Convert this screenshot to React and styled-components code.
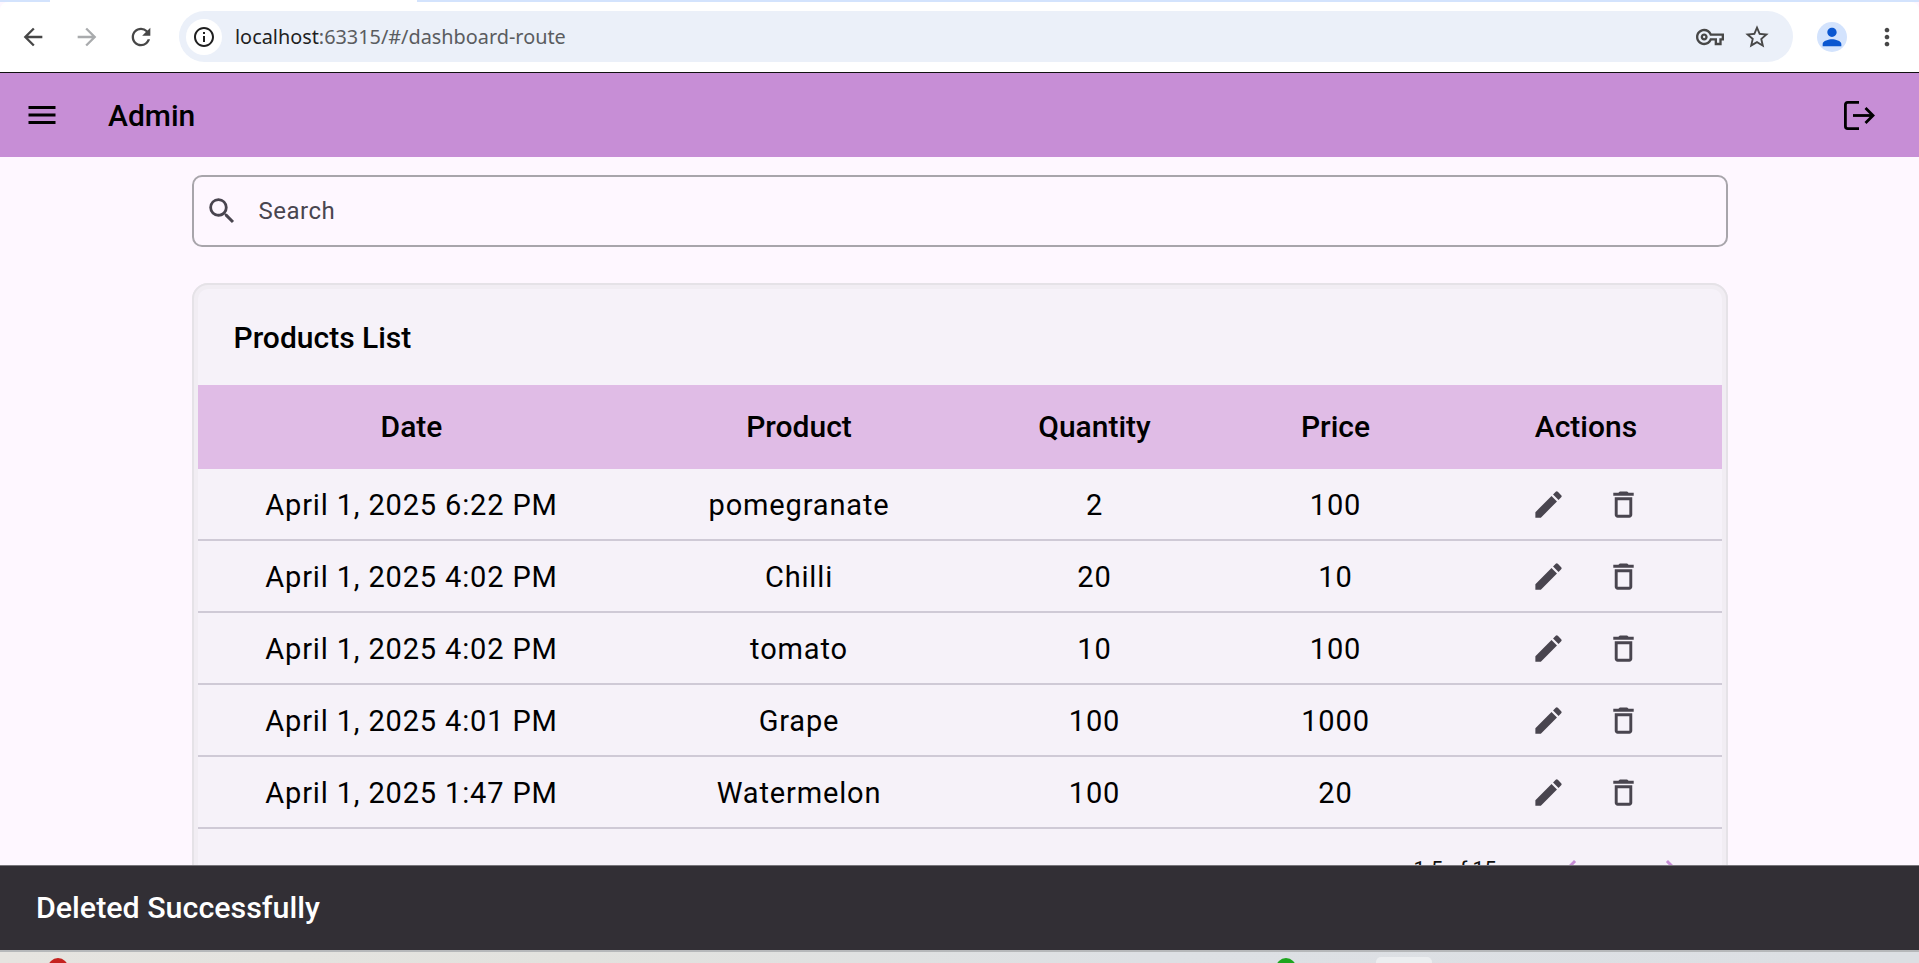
import React from 'react'
import styled, { createGlobalStyle } from 'styled-components'
import {
  MdArrowBack,
  MdArrowForward,
  MdRefresh,
  MdInfoOutline,
  MdOutlineVpnKey,
  MdStarBorder,
  MdPerson,
  MdMoreVert,
  MdMenu,
  MdSearch,
  MdEdit,
  MdDeleteOutline,
  MdChevronLeft,
  MdChevronRight,
} from 'react-icons/md'

const products = [
  { date: 'April 1, 2025 6:22 PM', name: 'pomegranate', qty: 2, price: 100 },
  { date: 'April 1, 2025 4:02 PM', name: 'Chilli', qty: 20, price: 10 },
  { date: 'April 1, 2025 4:02 PM', name: 'tomato', qty: 10, price: 100 },
  { date: 'April 1, 2025 4:01 PM', name: 'Grape', qty: 100, price: 1000 },
  { date: 'April 1, 2025 1:47 PM', name: 'Watermelon', qty: 100, price: 20 },
]

const App = () => (
  <Page>
    <GlobalStyle />
    <TabStrip>
      <ActiveTab />
    </TabStrip>
    <Toolbar>
      <NavButtons>
        <NavButton><MdArrowBack /></NavButton>
        <NavButton $disabled><MdArrowForward /></NavButton>
        <NavButton><MdRefresh /></NavButton>
      </NavButtons>
      <Omnibox>
        <SiteInfo><MdInfoOutline /></SiteInfo>
        <Url>
          <b>localhost</b>:63315/#/dashboard-route
        </Url>
        <OmniIcons>
          <MdOutlineVpnKey />
          <MdStarBorder />
        </OmniIcons>
      </Omnibox>
      <Avatar><MdPerson /></Avatar>
      <MoreButton><MdMoreVert /></MoreButton>
    </Toolbar>

    <Viewport>
      <AppBar>
        <MenuIcon><MdMenu /></MenuIcon>
        <AppTitle>Admin</AppTitle>
        <LogoutIcon>
          <svg width="31" height="29" viewBox="0 0 31 29" fill="none" stroke="#000" strokeWidth="2.8">
            <path d="M15 1.4H3.8Q1.4 1.4 1.4 3.8V25.2Q1.4 27.6 3.8 27.6H15" />
            <path d="M9 14.5H29" />
            <path d="M21.5 7L29 14.5L21.5 22" />
          </svg>
        </LogoutIcon>
      </AppBar>

      <Content>
        <SearchBox>
          <MdSearch />
          <SearchInput placeholder="Search" />
        </SearchBox>

        <Card>
          <CardTitle>Products List</CardTitle>
          <HeaderRow>
            <span>Date</span>
            <span>Product</span>
            <span>Quantity</span>
            <span>Price</span>
            <span>Actions</span>
          </HeaderRow>
          {products.map((p, i) => (
            <Row key={i}>
              <span>{p.date}</span>
              <span>{p.name}</span>
              <span>{p.qty}</span>
              <span>{p.price}</span>
              <Actions>
                <MdEdit />
                <MdDeleteOutline />
              </Actions>
            </Row>
          ))}
          <Pagination>
            <PageText>1-5 of 15</PageText>
            <PageArrow><MdChevronLeft /></PageArrow>
            <PageArrow><MdChevronRight /></PageArrow>
          </Pagination>
        </Card>
      </Content>

      <Snackbar>Deleted Successfully</Snackbar>
    </Viewport>

    <Taskbar>
      <TaskDot $color="#c5221f" $left="48px" />
      <TaskDot $color="#1ea51e" $left="1276px" />
      <TaskChip />
    </Taskbar>
  </Page>
)

export default App

const GlobalStyle = createGlobalStyle`
  html, body {
    margin: 0;
    padding: 0;
    height: 100%;
    overflow: hidden;
    background: #fef7ff;
    font-family: Roboto, "Liberation Sans", sans-serif;
  }
`

const Page = styled.div`
  display: flex;
  flex-direction: column;
  height: 963px;
  overflow: hidden;
`

const TabStrip = styled.div`
  height: 2px;
  background: #d3e3fd;
  padding-left: 50px;
`

const ActiveTab = styled.div`
  width: 367px;
  height: 2px;
  background: #fff;
`

const Toolbar = styled.div`
  flex: none;
  height: 71px;
  box-sizing: border-box;
  padding-bottom: 1px;
  background: #fff;
  border-bottom: 1px solid #111;
  border-radius: 8px 8px 0 0;
  display: flex;
  align-items: center;
`

const NavButtons = styled.div`
  display: flex;
  align-items: center;
  gap: 26px;
  padding-left: 19px;
  margin-right: 24px;
`

const NavButton = styled.div`
  display: flex;
  color: ${props => (props.$disabled ? '#a9abad' : '#474747')};
  font-size: 28px;
`

const Omnibox = styled.div`
  width: 1614px;
  height: 51px;
  border-radius: 26px;
  background: #ebf0f9;
  display: flex;
  align-items: center;
  padding: 0 22px 0 7px;
  box-sizing: border-box;
`

const SiteInfo = styled.div`
  width: 36px;
  height: 36px;
  border-radius: 50%;
  background: #fff;
  display: flex;
  align-items: center;
  justify-content: center;
  font-size: 24px;
  color: #1f1f1f;
`

const Url = styled.div`
  margin-left: 13px;
  font-family: "Noto Sans", "Open Sans", sans-serif;
  font-size: 19.85px;
  color: #5a5c60;
  flex: 1;

  b {
    font-weight: 400;
    color: #1f1f1f;
  }
`

const OmniIcons = styled.div`
  display: flex;
  align-items: center;
  gap: 19px;
  font-size: 28px;
  color: #474747;
`

const Avatar = styled.div`
  width: 30px;
  height: 30px;
  margin-left: 24px;
  border-radius: 50%;
  background: #d3e3fd;
  color: #0b57d0;
  display: flex;
  align-items: center;
  justify-content: center;
  font-size: 28px;
`

const MoreButton = styled.div`
  display: flex;
  margin-left: 26px;
  font-size: 28px;
  color: #474747;
`

const Viewport = styled.div`
  position: relative;
  flex: 1;
  display: flex;
  flex-direction: column;
  overflow: hidden;
  background: #fef7ff;
`

const AppBar = styled.header`
  height: 84px;
  flex: none;
  background: #c78ed6;
  display: flex;
  align-items: center;
  color: #000;
`

const MenuIcon = styled.div`
  display: flex;
  margin-left: 24px;
  font-size: 36px;
`

const AppTitle = styled.div`
  margin-left: 48px;
  font-size: 30px;
  font-weight: 500;
  flex: 1;
`

const LogoutIcon = styled.div`
  display: flex;
  margin-right: 44px;
`

const Content = styled.main`
  width: 1536px;
  margin: 18px auto 0;
`

const SearchBox = styled.div`
  height: 72px;
  box-sizing: border-box;
  border: 2px solid #a8a5ab;
  border-radius: 10px;
  display: flex;
  align-items: center;
  padding-left: 11px;
  color: #49454f;
  font-size: 34px;

  svg {
    flex: none;
  }
`

const SearchInput = styled.input`
  flex: 1;
  margin-left: 18px;
  border: 0;
  outline: 0;
  background: transparent;
  font-family: Roboto, sans-serif;
  font-size: 24px;
  letter-spacing: 0.5px;
  color: #49454f;

  &::placeholder {
    color: #49454f;
    opacity: 1;
  }
`

const Card = styled.section`
  margin-top: 36px;
  border: 6px solid #f1edf3;
  border-radius: 16px;
  background: #f6f2f9;
  outline: 2px solid #e5e2e7;
  outline-offset: -2px;
`

const CardTitle = styled.h2`
  margin: 0;
  height: 96px;
  padding: 0 0 0 36px;
  display: flex;
  align-items: center;
  font-size: 30px;
  font-weight: 500;
  color: #000;
  box-sizing: border-box;
`

const columns = '428px 347px 244px 238px 263px'

const HeaderRow = styled.div`
  display: grid;
  grid-template-columns: ${columns};
  align-items: center;
  justify-items: center;
  height: 84px;
  box-sizing: border-box;
  padding-bottom: 2px;
  background: #e0bce6;
  font-size: 30px;
  font-weight: 500;
  color: #000;
`

const Row = styled.div`
  display: grid;
  grid-template-columns: ${columns};
  align-items: center;
  justify-items: center;
  height: 72px;
  box-sizing: border-box;
  padding-top: 1px;
  border-bottom: 2px solid #cfcad6;
  font-size: 29px;
  letter-spacing: 0.85px;
  color: #000;
`

const Actions = styled.div`
  display: flex;
  align-items: center;
  gap: 40px;
  font-size: 35px;
  color: #49454f;
`

const Pagination = styled.div`
  height: 79px;
  display: flex;
  align-items: center;
  padding-left: 1216px;
  font-size: 21px;
`

const PageText = styled.span`
  flex: none;
  width: 139px;
  color: #111;
`

const PageArrow = styled.span`
  flex: none;
  display: flex;
  font-size: 36px;
  color: #c78ed6;

  & + & {
    margin-left: 64px;
  }
`

const Snackbar = styled.div`
  position: absolute;
  left: 0;
  right: 0;
  bottom: 0;
  height: 85px;
  box-sizing: border-box;
  display: flex;
  align-items: center;
  padding: 0 0 2px 36px;
  background: #322f35;
  border-top: 1px solid #77757a;
  font-size: 30.4px;
  font-weight: 500;
  color: #fff;
`

const Taskbar = styled.div`
  position: relative;
  flex: none;
  height: 13px;
  overflow: hidden;
  border-top: 2px solid #b6b8ba;
  box-sizing: border-box;
  background: linear-gradient(90deg, #e6e4e0, #e2e2de 30%, #dde0e4 60%, #dcdfe3);
`

const TaskDot = styled.div`
  position: absolute;
  left: ${props => props.$left};
  top: 6px;
  width: 20px;
  height: 20px;
  border-radius: 50%;
  background: ${props => props.$color};
`

const TaskChip = styled.div`
  position: absolute;
  left: 1376px;
  top: 5px;
  width: 56px;
  height: 20px;
  border-radius: 5px 5px 0 0;
  background: #eceef0;
`
